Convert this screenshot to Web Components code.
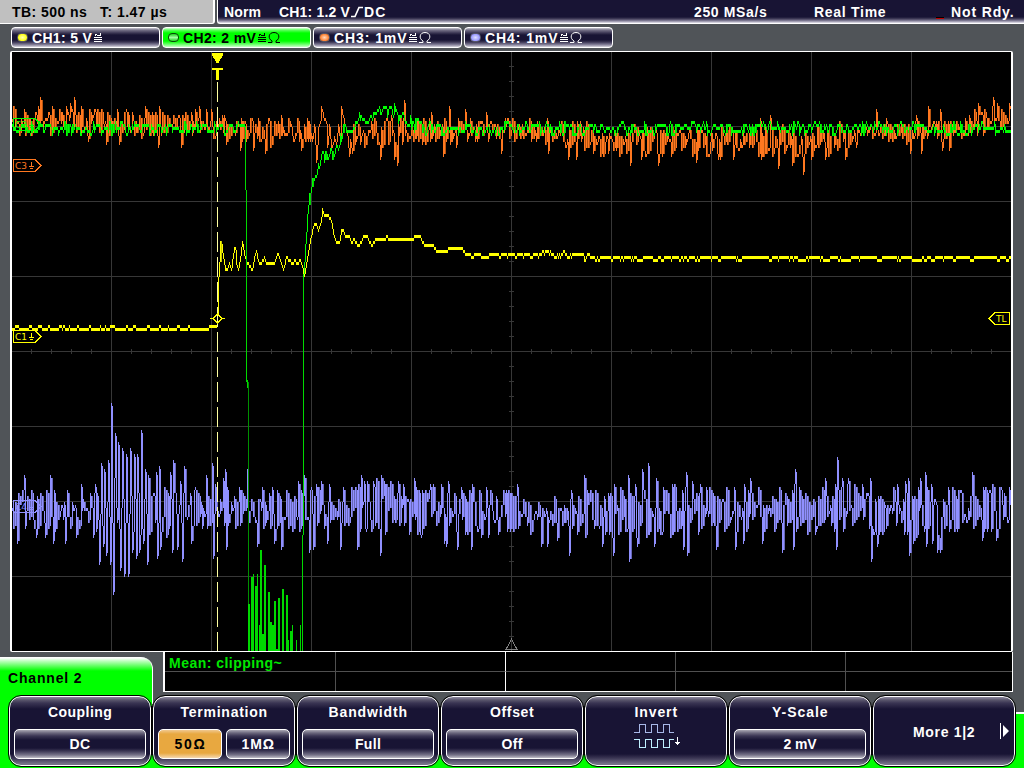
<!DOCTYPE html>
<html lang="en">
<head>
<meta charset="utf-8">
<title>Oscilloscope</title>
<style>
  html, body {
    margin: 0;
    height: 768px;
    overflow: hidden;
    background: #505458;
  }
</style>
</head>
<body>
<scope-screen></scope-screen>

<script>
// Text that is spaced out to a given width, like the fixed glyph cells of the instrument
class FitLabel extends HTMLElement {
  constructor() {
    super();
    this.attachShadow({ mode: 'open' });
    this.shadowRoot.innerHTML = `
      <style>
        :host {
          display: block;
          flex: none;
          height: 14px;
          font: bold 14px/14px "Liberation Sans", Arial, sans-serif;
          white-space: nowrap;
        }
        span { display: inline-block; }
      </style>
      <span><slot></slot></span>
    `;
  }

  connectedCallback() {
    const width = Number(this.getAttribute('width'));
    const span = this.shadowRoot.querySelector('span');
    this.style.width = `${width}px`;
    const natural = span.getBoundingClientRect().width;
    span.style.letterSpacing = `${(width - natural) / (this.textContent.length - 0.5)}px`;
  }
}

class StatusBar extends HTMLElement {
  constructor() {
    super();
    this.attachShadow({ mode: 'open' });
    this.shadowRoot.innerHTML = `
      <style>
        :host {
          display: flex;
          flex: none;
          gap: 2px;
          height: 24px;
          color: #fff;
        }
        div {
          box-sizing: border-box;
          height: 24px;
          display: flex;
          padding-top: 5px;
        }
        .time {
          width: 215px;
          padding-left: 12px;
          gap: 13px;
          color: #000;
          background: #c0c0c0;
          border-right: 2px solid #fff;
          border-bottom: 1px solid #fff;
          border-bottom-right-radius: 3px;
        }
        .trigger {
          flex: 1;
          padding-left: 6px;
          border-left: 1px solid #fff;
          border-bottom: 1px solid #fff;
          border-bottom-left-radius: 3px;
          background: linear-gradient(#181434 17px, #45405c 19px, #8c88a0 21px, #e8e6ee 23px);
        }
        .rate { margin-left: 308px; }
        .mode { margin-left: 47px; }
        .led { width: 8px; height: 2px; margin: 12px 7px 0 50px; background: linear-gradient(#000 50%, #c00000 50%); }
      </style>
      <div class="time">
        <fit-label width="75">TB: 500 ns</fit-label>
        <fit-label width="67">T: 1.47 µs</fit-label>
      </div>
      <div class="trigger">
        <fit-label width="37">Norm</fit-label>
        <fit-label width="71" style="margin-left:18px">CH1: 1.2 V</fit-label>
        <svg width="14" height="14" viewBox="0 0 14 14" fill="none" stroke="#fff" stroke-width="1.7"><path d="M1 11.5H5L9 2.5H13"/></svg>
        <fit-label width="22">DC</fit-label>
        <fit-label class="rate" width="73">250 MSa/s</fit-label>
        <fit-label class="mode" width="72">Real Time</fit-label>
        <span class="led"></span>
        <fit-label width="63">Not Rdy.</fit-label>
      </div>
    `;
  }
}

class ChannelTab extends HTMLElement {
  constructor() {
    super();
    this.attachShadow({ mode: 'open' });
    this.shadowRoot.innerHTML = `
      <style>
        :host {
          box-sizing: border-box;
          display: flex;
          width: 149px;
          height: 21px;
          padding: 3px 0 0 6px;
          border: 1px solid #fff;
          border-radius: 4px;
          color: #fff;
          background: linear-gradient(#c8c6d0, #777389 2px, #3a3553 5px, #181434 7px, #181434 12px, #3a3553 14px, #8c88a0 17px, #d8d6de);
        }
        :host([active]) {
          color: #000;
          background: linear-gradient(#d8ffd8, #60ff60 2px, #00ff00 5px, #00ff00 13px, #60ff60 16px, #c8ffc8);
        }
        i {
          box-sizing: border-box;
          width: 11px;
          height: 9px;
          margin: 2px 4px 0 -1px;
          border: 1px solid #556;
          border-radius: 4px;
          background: radial-gradient(#fff -30%, var(--dot) 75%);
        }
        :host([active]) i { border-color: #084808; background: linear-gradient(#20d020, #a0ffa0 50%, #20d020); }
        slot { display: block; }
        svg { margin-left: 2px; }
      </style>
      <i></i>
      <slot></slot>
      <svg width="24" height="14" viewBox="0 0 24 14" fill="none" stroke="currentColor" shape-rendering="crispEdges">
        <path d="M1 5V3.500H3M3 4.500H6M6.500 5V2M0 6.500H8M0 8.500H8M0 10.500H8"/>
        <path class="ohm" shape-rendering="auto" d="M10 11.500H14V10C9.500 7.500 10.500 1.500 16 1.500S22.500 7.500 18 10V11.500H22"/>
      </svg>
    `;
  }

  connectedCallback() {
    if (this.hasAttribute('high-z')) this.shadowRoot.querySelector('.ohm').remove();
  }
}

// Small repeatable generator, so the noise is the same on every load
const makeRandom = (seed) => () => {
  seed = (seed * 1664525 + 1013904223) % 4294967296;
  return seed / 4294967296;
};

// Linear interpolation in a list of [x, y, amplitude]
const valueAt = (points, x, index) => {
  if (x <= points[0][0]) return points[0][index];
  for (let i = 1; i < points.length; i++) {
    const a = points[i - 1];
    const b = points[i];
    if (x <= b[0]) return a[index] + (b[index] - a[index]) * (x - a[0]) / (b[0] - a[0]);
  }
  return points[points.length - 1][index];
};

// Vertical resolution of the traces is three pixels
const quantize = y => Math.round((y - 2) / 3) * 3 + 2;

const LEFT = 12;
const RIGHT = 1011;

const YELLOW = [[12,329],[206,329],[210,326],[216,326],[217,318],[218,278],[219,262],[220,242],[221,243],[222,250],[223,256],[225,269],[227,268],[229,263],[231,270],[232,260],[234,248],[235,247],[236,262],[238,270],[240,256],[241,248],[242,242],[243,248],[245,258],[246,265],[247,262],[249,266],[252,270],[254,256],[256,250],[257,258],[259,263],[261,262],[264,257],[266,262],[270,263],[274,263],[277,253],[280,260],[283,270],[286,256],[289,260],[292,264],[295,260],[297,264],[300,260],[302,266],[304,275],[305,268],[306,262],[308,252],[310,240],[312,230],[314,224],[316,225],[318,231],[320,224],[322,210],[324,215],[328,215],[330,218],[332,226],[334,237],[337,243],[339,243],[341,230],[343,231],[346,237],[349,237],[351,243],[354,239],[357,245],[360,243],[363,237],[367,237],[371,245],[375,240],[380,240],[387,237],[390,240],[411,240],[415,236],[420,236],[424,245],[432,245],[437,252],[444,252],[448,249],[462,249],[465,254],[472,256],[478,254],[512,254],[521,252],[531,256],[536,254],[541,251],[552,251],[558,256],[563,252],[570,254],[580,254],[585,256],[590,254],[594,257],[1011,257]];

const GREEN_RISE = [[303,276],[304,262],[305,244],[306,232],[307,216],[308,206],[309,194],[310,194],[311,188],[312,182],[313,176],[315,178],[317,168],[319,172],[321,160],[324,158],[330,156],[335,149],[339,141],[342,134],[344,127],[350,125],[357,121],[365,117],[370,114],[376,116],[382,112],[387,109],[391,107],[394,111],[398,115],[404,117],[407,121],[412,125],[425,128],[1011,128]];

const GREEN_BARS = [[248,2,604],[251,2,577],[253,1,574],[255,2,586],[257,1,574],[259,1,625],[260,2,550],[262,2,634],[264,2,565],[268,2,592],[270,2,622],[272,2,625],[274,2,601],[276,2,649],[278,2,598],[282,2,589],[286,2,595],[288,1,640],[290,2,631],[292,1,625],[296,1,640],[300,1,625]];

const ORANGE = [[12,120,14],[90,121,15],[130,124,14],[217,124,13],[225,130,14],[300,134,15],[420,131,13],[510,128,12],[560,132,14],[600,140,15],[700,142,15],[840,140,17],[860,133,10],[940,130,11],[975,122,13],[1011,117,14]];
const ORANGE_PEAKS = [[40,97],[66,106],[70,105],[74,97],[81,107],[88,141],[90,111],[106,144],[119,144],[126,109],[145,107],[159,106],[158,147],[181,147],[195,111],[199,106],[211,109],[240,150],[253,149],[265,153],[281,115],[301,150],[307,118],[310,141],[380,157],[391,115],[394,158],[397,165],[404,100],[431,112],[443,156],[449,106],[456,147],[465,109],[486,114],[501,151],[548,151],[568,157],[576,157],[630,163],[658,163],[641,157],[696,160],[718,157],[733,159],[761,157],[760,119],[778,166],[770,115],[792,163],[803,172],[811,157],[825,157],[845,157],[856,145],[876,109],[886,119],[910,151],[916,115],[921,151],[928,106],[940,109],[942,148],[949,148],[969,115],[978,103],[993,97],[997,103],[1010,106]];
const ORANGE_PATH = [[312,140],[314,125],[316,162],[318,128],[320,121],[321,106],[323,116],[326,121],[327,145],[329,126],[331,150],[334,138],[336,144],[338,126],[340,142],[341,108],[344,122],[347,135],[349,156],[350,140],[352,152]];

const PURPLE = [[12,509,20],[60,510,20],[90,508,18],[100,510,26],[112,505,36],[140,505,32],[160,510,26],[230,508,20],[300,510,22],[345,505,24],[380,504,28],[470,512,24],[560,512,21],[620,512,26],[700,510,24],[830,508,25],[930,511,26],[1011,508,24]];
const PURPLE_PEAKS = [[17,541],[24,475],[36,535],[45,535],[50,475],[53,543],[65,541],[76,535],[81,484],[93,537],[95,484],[99,562],[101,463],[103,546],[104,469],[106,553],[108,460],[110,562],[111,403],[113,592],[115,433],[117,520],[118,442],[120,568],[122,448],[124,574],[126,454],[128,574],[130,448],[132,550],[134,454],[136,556],[137,454],[139,550],[141,430],[143,541],[145,469],[147,562],[148,475],[156,472],[157,556],[159,466],[160,547],[170,472],[172,550],[173,460],[177,547],[180,481],[182,559],[184,466],[190,493],[191,541],[195,487],[206,475],[212,463],[213,556],[215,484],[223,480],[225,469],[226,547],[239,487],[247,469],[257,544],[262,487],[272,487],[274,541],[281,547],[298,481],[304,475],[309,550],[313,547],[316,484],[321,481],[327,541],[329,484],[340,547],[343,487],[357,547],[361,475],[364,483],[367,481],[374,484],[380,553],[381,475],[384,481],[403,484],[414,478],[421,535],[430,484],[441,484],[444,542],[446,544],[448,481],[457,547],[461,487],[471,547],[472,484],[486,487],[488,537],[517,484],[541,544],[547,544],[557,538],[569,553],[571,490],[584,475],[602,544],[613,553],[614,484],[628,475],[629,559],[635,484],[637,544],[642,469],[648,463],[654,544],[656,478],[672,484],[683,547],[686,472],[687,553],[692,481],[700,484],[706,487],[716,549],[735,547],[743,541],[744,484],[750,478],[758,487],[762,541],[782,550],[793,547],[795,469],[825,478],[836,547],[837,457],[842,478],[848,478],[870,478],[871,559],[877,544],[897,484],[905,481],[908,478],[909,553],[913,541],[920,478],[925,472],[926,544],[932,541],[937,550],[940,550],[948,487],[972,472],[982,538],[996,538],[1001,487],[1009,487]];

class ScopePlot extends HTMLElement {
  constructor() {
    super();
    this.attachShadow({ mode: 'open' });
    this.shadowRoot.innerHTML = `
      <style>
        :host {
          display: block;
          flex: none;
          width: 999px;
          height: 599px;
          border: solid #fff;
          border-width: 1px 2px;
          border-radius: 2px;
          background: #000;
        }
        svg { display: block; }
        text { font: 9px "DejaVu Sans", sans-serif; }
      </style>
      <svg width="999" height="599" viewBox="12 52 999 599" shape-rendering="crispEdges">
        <path d="${this.grid()}" fill="none" stroke="#373737"/>
        <path d="M511.500 639L506 649.500H517Z" fill="none" stroke="#808080"/>
        ${this.traces()}
        <path d="M217.500 82V651" stroke="#ffffa0" stroke-dasharray="20 5"/>
        <path d="M212 53H223V55L218.500 63H216.500L212 55ZM212 68H223V70H219V80H216V70H212Z" fill="#ffff00"/>
        <path d="M210 318.500H213L217.500 314L222 318.500L217.500 323L213 318.500M222 318.500H225" fill="none" stroke="#ffff00"/>
        ${this.tag('C2', 118, '#00ff00')}
        ${this.tag('C3', 159, '#ff7820')}
        ${this.tag('C1', 330, '#ffff00')}
        ${this.tag('C4', 500, '#9090ff')}
        <g fill="none" stroke="#ffff00">
          <path d="M1009.500 312.500H995L989 318.500L995 324.500H1009.500Z"/>
          <text x="996" y="322" fill="#ffff00" stroke="none">TL</text>
        </g>
      </svg>
    `;
  }

  grid() {
    let d = '';
    for (let x = 111.5; x < RIGHT; x += 100) d += `M${x} 52V651`;
    for (let y = 126.5; y < 651; y += 75) d += `M12 ${y}H1011`;
    for (let y = 66.5; y < 651; y += 15) d += `M509 ${y}H514`;
    for (let x = 31.5; x < RIGHT; x += 20) d += `M${x} 349V354`;
    return d;
  }

  tag(name, y, color) {
    return `
      <g fill="none" stroke="${color}">
        <path d="M13.500 ${y + 0.5}H35L41 ${y + 6.5}L35 ${y + 12.5}H13.500Z"/>
        <path d="M31.500 ${y + 3}V${y + 8}M29 ${y + 7.5}H34M30 ${y + 9.5}H33"/>
        <text x="15" y="${y + 10}" fill="${color}" stroke="none">${name}</text>
      </g>
    `;
  }

  // One pixel wide columns, each reaching from the previous sample to the current one.
  // A held sample repeats the column before it once, in the dim colour.
  columns(samples, start, color, dim) {
    let bright = '';
    let dark = '';
    let last = null;
    samples.forEach((y, i) => {
      const prev = i ? samples[i - 1] : y;
      if (y === prev && last && last.size > 6) {
        dark += `M${start + i} ${last.top}h1v${last.size}h-1z`;
        last = null;
        return;
      }
      const size = Math.max(3, Math.abs(prev - y));
      const top = (y > prev ? y - size + 3 : y) - 1;
      bright += `M${start + i} ${top}h1v${size}h-1z`;
      last = { top, size };
    });
    return `<path d="${dark}" fill="${dim}"/><path d="${bright}" fill="${color}"/>`;
  }

  noisy(points, peaks, seed, hold) {
    const random = makeRandom(seed);
    const samples = [];
    let y = points[0][1];
    let side = 1;
    let held = false;
    for (let x = LEFT; x < RIGHT; x++) {
      held = !held && random() < hold;
      if (!held) {
        side = random() < 0.8 ? -side : side;
        y = quantize(valueAt(points, x, 1) + side * random() * valueAt(points, x, 2));
      }
      samples.push(y);
    }
    peaks.forEach(([px, py]) => { samples[px - LEFT] = quantize(py); });
    return samples;
  }

  traces() {
    const random = makeRandom(77);
    const purple = this.noisy(PURPLE, PURPLE_PEAKS, 41, 0.7);
    const orange = this.noisy(ORANGE, ORANGE_PEAKS, 9, 0.6);
    for (let x = 312; x < 353; x++) orange[x - LEFT] = quantize(valueAt(ORANGE_PATH, x, 1));

    let jitter = 0;
    const shake = () => {
      if (random() < 0.6) jitter = 3 * Math.round((random() - 0.5) * 4.2);
      return jitter;
    };
    const flat = [];
    for (let x = LEFT; x < 245; x++) flat.push(quantize(128 + shake()));
    flat.push(128);

    const rise = [];
    for (let x = 303; x < RIGHT; x++) {
      rise.push(quantize(valueAt(GREEN_RISE, x, 1) + (x < 312 ? 0 : shake())));
    }

    const yellow = [];
    let offset = 0;
    for (let x = LEFT; x < RIGHT; x++) {
      if (random() > 0.5) offset = random() > 0.7 ? 3 : 0;
      let y = quantize(valueAt(YELLOW, x, 1));
      if (x < 206) y -= offset;
      if (x > 480) y += offset;
      yellow.push(y);
    }

    const bars = GREEN_BARS.map(([x, w, top]) => `M${x} ${top}h${w}V651h${-w}z`).join('');

    return `
      ${this.columns(purple, LEFT, '#9090ff', '#6868b8')}
      ${this.columns(orange, LEFT, '#ff7820', '#b85410')}
      ${this.columns(yellow, LEFT, '#ffff00', '#c8c800')}
      <path d="M245 126h1V190h-1zM246 190h1V382h-1zM303 276h1V535h-1zM302 535h1V651h-1zM247 380h1V388h-1z" fill="#00d800"/>
      <path d="M248 382h1V651h-1z" fill="#009000"/>
      <path d="${bars}" fill="#00d800"/>
      ${this.columns(flat, LEFT, '#00ff00', '#00d800')}
      ${this.columns(rise, 303, '#00ff00', '#00d800')}
    `;
  }
}

class MeasureTable extends HTMLElement {
  constructor() {
    super();
    this.attachShadow({ mode: 'open' });
    this.shadowRoot.innerHTML = `
      <style>
        :host {
          box-sizing: border-box;
          display: grid;
          grid-template: 20px 19px / 171px repeat(4, 170px);
          overflow: hidden;
          width: 850px;
          height: 40px;
          border: solid #fff;
          border-width: 0 1px 1px 2px;
          color: #00e800;
          background: #000;
        }
        div { box-sizing: border-box; border-right: 1px solid #505050; border-bottom: 1px solid #505050; }
        div:nth-of-type(5n + 2) { border-right-color: #fff; }
        div:nth-of-type(n + 6) { border-bottom: 0; }
        div:first-of-type { padding: 4px 0 0 4px; }
      </style>
      <div><fit-label width="113">Mean: clipping~</fit-label></div>
      ${'<div></div>'.repeat(9)}
    `;
  }
}

class KeyValue extends HTMLElement {
  constructor() {
    super();
    this.attachShadow({ mode: 'open' });
    this.shadowRoot.innerHTML = `
      <style>
        :host {
          box-sizing: border-box;
          display: flex;
          flex: 1;
          justify-content: center;
          height: 30px;
          padding-top: 7px;
          border: 1px solid #fff;
          border-radius: 5px;
          color: #fff;
          background: linear-gradient(#aaa8b4, #6a667c 3px, #3a3553 6px, #181434 10px, #181434 18px, #3a3553 21px, #777389 25px, #c0bec8);
        }
        :host([selected]) {
          color: #000;
          background: linear-gradient(#f0c890, #e8a840 4px, #e8a840 23px, #f4d8b0);
        }
      </style>
      <slot></slot>
    `;
  }
}

class SoftKey extends HTMLElement {
  constructor() {
    super();
    this.attachShadow({ mode: 'open' });
    this.shadowRoot.innerHTML = `
      <style>
        :host {
          box-sizing: border-box;
          display: flex;
          flex-direction: column;
          align-items: center;
          height: 70px;
          padding: 8px 4px 0;
          border: 1px solid #fff;
          border-radius: 12px;
          outline: 1px solid #000;
          color: #fff;
          background: linear-gradient(#8c88a0, #5a566c 3px, #3a3553 6px, #181434 12px, #181434 57px, #3a3553 61px, #777389 67px);
        }
        .values {
          display: flex;
          gap: 4px;
          align-self: stretch;
          margin-top: 10px;
        }
        slot[name="icon"]::slotted(*) { margin-top: 4px; }
        :host([more]) { flex-direction: row; align-items: flex-start; padding: 28px 0 0 39px; }
        :host([more]) .values { margin: -2px 0 0 25px; }
      </style>
      <slot name="label"></slot>
      <slot name="icon"></slot>
      <div class="values"><slot></slot></div>
    `;
  }
}

class ChannelTitle extends HTMLElement {
  constructor() {
    super();
    this.attachShadow({ mode: 'open' });
    this.shadowRoot.innerHTML = `
      <style>
        :host {
          box-sizing: border-box;
          display: block;
          width: 153px;
          height: 35px;
          padding: 14px 0 0 8px;
          border-right: 1px solid #fff;
          border-top-right-radius: 12px;
          color: #000;
          background: linear-gradient(#fff 1px, #c0ffc0 4px, #60ff60 9px, #00ff00 14px);
        }
      </style>
      <slot></slot>
    `;
  }
}

class ScopeScreen extends HTMLElement {
  constructor() {
    super();
    this.attachShadow({ mode: 'open' });
    this.shadowRoot.innerHTML = `
      <style>
        :host {
          display: flex;
          flex-direction: column;
          width: 1024px;
          height: 768px;
          overflow: hidden;
          background: #505458;
        }
        .tabs { flex: none; display: flex; gap: 2px; padding: 3px 0 0 11px; height: 21px; }
        scope-plot { margin-left: 10px; margin-top: 3px; }
        .info { flex: none; display: flex; gap: 10px; height: 40px; }
        channel-title { margin-top: 5px; }
        .keys {
          box-sizing: border-box;
          display: flex;
          gap: 2px;
          flex: 1;
          padding: 4px 0 0 9px;
          background:
            linear-gradient(#00ff00, #00ff00) 0 0 / 9px 100% no-repeat,
            linear-gradient(#00ff00, #00ff00) 0 0 / 152px 14px no-repeat,
            linear-gradient(#fff, #fff) 152px 0 / 1px 12px no-repeat,
            linear-gradient(#00ff00, #00ff00) 0 63px / 100% 13px no-repeat,
            linear-gradient(transparent 20px, #fff 20px, #fff 22px, #00ff00 22px) 1016px 0 / 8px 100% no-repeat,
            linear-gradient(transparent 14px, #000 14px) 20px 0 / 984px 63px no-repeat;
        }
        soft-key { flex: none; width: 142px; }
      </style>
      <status-bar></status-bar>
      <div class="tabs">
        <channel-tab high-z style="--dot:#ffff00"><fit-label width="60">CH1: 5 V</fit-label></channel-tab>
        <channel-tab active style="--dot:#40e040"><fit-label width="73">CH2: 2 mV</fit-label></channel-tab>
        <channel-tab style="--dot:#ff7820"><fit-label width="73">CH3: 1mV</fit-label></channel-tab>
        <channel-tab style="--dot:#9090ff"><fit-label width="73">CH4: 1mV</fit-label></channel-tab>
      </div>
      <scope-plot></scope-plot>
      <div class="info">
        <channel-title><fit-label width="74">Channel 2</fit-label></channel-title>
        <measure-table></measure-table>
      </div>
      <div class="keys">
        <soft-key>
          <fit-label slot="label" width="64">Coupling</fit-label>
          <key-value><fit-label width="21">DC</fit-label></key-value>
        </soft-key>
        <soft-key>
          <fit-label slot="label" width="87">Termination</fit-label>
          <key-value selected><fit-label width="31">50Ω</fit-label></key-value>
          <key-value><fit-label width="33">1MΩ</fit-label></key-value>
        </soft-key>
        <soft-key>
          <fit-label slot="label" width="79">Bandwidth</fit-label>
          <key-value><fit-label width="26">Full</fit-label></key-value>
        </soft-key>
        <soft-key>
          <fit-label slot="label" width="44">Offset</fit-label>
          <key-value><fit-label width="21">Off</fit-label></key-value>
        </soft-key>
        <soft-key>
          <fit-label slot="label" width="43">Invert</fit-label>
          <svg slot="icon" width="48" height="28" viewBox="-1 0 48 28" fill="none" shape-rendering="crispEdges">
            <path d="M1 9.500H6.500V1.500H12.500V9.500H18.500V1.500H24.500V9.500H30.500V1.500H36.500V9.500H41" stroke="#a8b8e8"/>
            <path d="M1 16.500H6.500V24.500H12.500V16.500H18.500V24.500H24.500V16.500H30.500V24.500H36.500V16.500H41" stroke="#c0f0ff"/>
            <path d="M44.500 14V22M42 19.500H47M43 20.500H46" stroke="#fff"/>
          </svg>
        </soft-key>
        <soft-key>
          <fit-label slot="label" width="56">Y-Scale</fit-label>
          <key-value><fit-label width="33">2 mV</fit-label></key-value>
        </soft-key>
        <soft-key more>
          <fit-label slot="label" width="62">More 1|2</fit-label>
          <svg width="10" height="16" viewBox="0 0 10 16" fill="#fff"><path d="M0 0H1V16H0ZM3 2L9 8L3 14Z"/></svg>
        </soft-key>
      </div>
    `;
  }
}

window.customElements.define('fit-label', FitLabel);
window.customElements.define('status-bar', StatusBar);
window.customElements.define('channel-tab', ChannelTab);
window.customElements.define('scope-plot', ScopePlot);
window.customElements.define('measure-table', MeasureTable);
window.customElements.define('key-value', KeyValue);
window.customElements.define('soft-key', SoftKey);
window.customElements.define('channel-title', ChannelTitle);
window.customElements.define('scope-screen', ScopeScreen);
</script>
</body>
</html>
